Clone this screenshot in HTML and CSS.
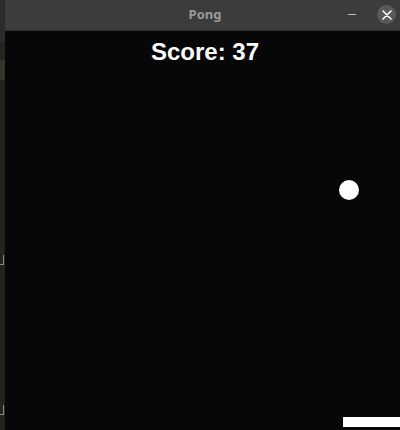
FILE: index.html
```html
<!DOCTYPE html>
<html>
<head>
<meta charset="utf-8">
<link rel="stylesheet" href="styles.css">
</head>
<body>
<div class="desktop">
  <div class="side">
    <div class="side-top"></div>
    <div class="side-mid"></div>
    <div class="side-hl"></div>
    <div class="side-rest">
      <span class="mark m1"></span>
      <span class="mark m2"></span>
    </div>
  </div>
  <div class="window">
    <div class="titlebar">
      <span class="title">Pong</span>
      <div class="controls">
        <span class="min"></span>
        <span class="close">
          <svg width="10" height="10" viewBox="0 0 10 10"><path d="M1 1L9 9M9 1L1 9" stroke="#ffffff" stroke-width="1.6" stroke-linecap="round"/></svg>
        </span>
      </div>
    </div>
    <div class="canvas">
      <div class="score">Score: 37</div>
      <div class="ball"></div>
      <div class="paddle"></div>
    </div>
  </div>
</div>
</body>
</html>
```
FILE: styles.css
```css
html, body {
  margin: 0;
  padding: 0;
  width: 400px;
  height: 430px;
  overflow: hidden;
  background: #25251f;
}
.desktop {
  display: flex;
  width: 405px;
  height: 430px;
}
.side {
  width: 5px;
  flex: none;
  display: flex;
  flex-direction: column;
}
.side-top { height: 42px; background: #2b2b28; }
.side-mid { height: 18px; background: #25251f; }
.side-hl { height: 20px; background: #34342c; }
.side-rest { flex: 1; background: #23231e; position: relative; overflow: hidden; }
.mark {
  position: absolute;
  left: 0;
  width: 3px;
  height: 9px;
  border-right: 1px solid #8a8a80;
  border-bottom: 1px solid #8a8a80;
}
.m1 { top: 175px; }
.m2 { top: 325px; }
.window {
  width: 400px;
  flex: none;
  display: flex;
  flex-direction: column;
}
.titlebar {
  height: 31px;
  background: #3c3c3c;
  position: relative;
  display: flex;
  align-items: center;
  justify-content: center;
  border-bottom: 1px solid #2e2e2e;
  box-sizing: border-box;
}
.title {
  font-family: "Noto Sans", "DejaVu Sans", sans-serif;
  font-weight: bold;
  font-size: 13px;
  color: #9a9a9a;
  margin-top: -3px;
}
.controls {
  position: absolute;
  right: 9px;
  top: 5px;
  display: flex;
  align-items: center;
  gap: 21px;
}
.min {
  width: 8px;
  height: 1px;
  background: #bdbdbd;
}
.close {
  width: 19px;
  height: 19px;
  border-radius: 50%;
  background: #595959;
  display: flex;
  align-items: center;
  justify-content: center;
}
.canvas {
  flex: 1;
  background: #070707;
  position: relative;
}
.score {
  text-align: center;
  font-family: "Liberation Sans", Arial, sans-serif;
  font-weight: bold;
  font-size: 24px;
  color: #ffffff;
  padding-top: 7px;
  line-height: 28px;
}
.ball {
  position: absolute;
  left: 334px;
  top: 149px;
  width: 20px;
  height: 20px;
  border-radius: 50%;
  background: #ffffff;
}
.paddle {
  position: absolute;
  left: 338px;
  top: 386px;
  width: 60px;
  height: 10px;
  background: #ffffff;
}
```
